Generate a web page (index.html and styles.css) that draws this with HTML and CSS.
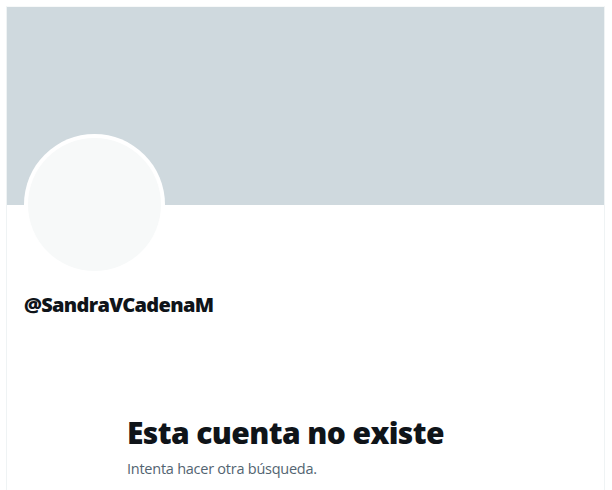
FILE: index.html
```html
<!DOCTYPE html>
<html lang="es">
<head>
<meta charset="utf-8">
<title>@SandraVCadenaM</title>
<link rel="stylesheet" href="styles.css">
</head>
<body>
<main class="profile">
  <div class="banner"></div>
  <div class="info">
    <div class="avatar"><div class="avatar-fill"></div></div>
    <div class="handle">@SandraVCadenaM</div>
  </div>
  <section class="empty">
    <h1 class="empty-title">Esta cuenta no existe</h1>
    <p class="empty-text">Intenta hacer otra búsqueda.</p>
  </section>
</main>
</body>
</html>
```

FILE: styles.css
```css
html, body {
  margin: 0;
  padding: 0;
  background: #ffffff;
}
body {
  font-family: "Open Sans", "Noto Sans", "Liberation Sans", sans-serif;
  color: #0f1419;
}
.profile {
  margin: 6px 0 0 6px;
  width: 597px;
  min-height: 484px;
  border-left: 1px solid #eff3f4;
  border-right: 1px solid #eff3f4;
  border-top: 1px solid #f7f9f9;
  display: flex;
  flex-direction: column;
}
.banner {
  height: 198px;
  background: #cfd9de;
}
.info {
  padding: 0 16px 0 17px;
  display: flex;
  flex-direction: column;
}
.avatar {
  margin-top: -71px;
  width: 141px;
  height: 141px;
  border-radius: 50%;
  background: #ffffff;
  display: flex;
  align-items: center;
  justify-content: center;
}
.avatar-fill {
  width: 133px;
  height: 133px;
  border-radius: 50%;
  background: #f7f9f9;
}
.handle {
  margin-top: 18px;
  font-size: 20px;
  line-height: 24px;
  font-weight: 800;
  letter-spacing: -0.7px;
}
.empty {
  margin: 98px 0 0 120px;
}
.empty-title {
  margin: 0;
  font-size: 30px;
  line-height: 36px;
  font-weight: 800;
  letter-spacing: -0.6px;
}
.empty-text {
  margin: 8px 0 0 0;
  font-size: 14.5px;
  line-height: 20px;
  font-weight: 400;
  letter-spacing: -0.25px;
  color: #536471;
}
```
